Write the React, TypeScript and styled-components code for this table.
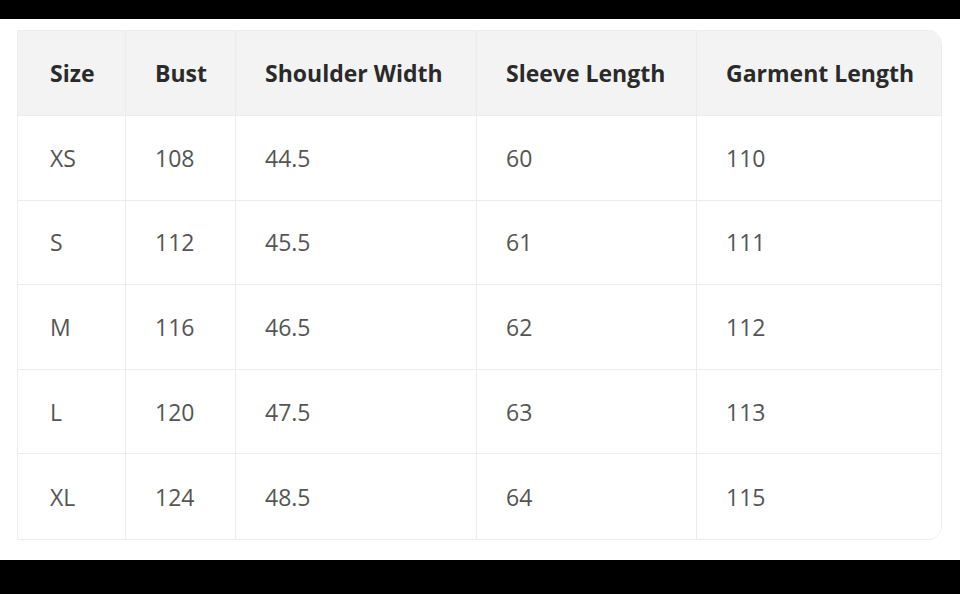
import React from "react";
import styled, { createGlobalStyle } from "styled-components";

const Global = createGlobalStyle`
  html, body { margin: 0; padding: 0; background: #000; }
  body { width: 960px; height: 594px; overflow: hidden; font-family: "Open Sans", "Noto Sans", sans-serif; }
`;

const Page = styled.div`
  width: 960px;
  height: 594px;
  display: flex;
  flex-direction: column;
  background: #000;
`;

const TopBar = styled.div`
  height: 19px;
  flex: none;
  background: #000;
`;

const BottomBar = styled.div`
  flex: 1;
  background: #000;
`;

const Sheet = styled.div`
  flex: none;
  background: #fff;
  padding: 11px 18px 20px 17px;
`;

const Table = styled.div`
  display: grid;
  grid-template-columns: 108px 110px 241px 220px 246px;
  grid-template-rows: 85px repeat(5, 84.6px);
  border: 1px solid #ececec;
  border-radius: 2px 14px 14px 2px;
  overflow: hidden;
  box-sizing: border-box;
`;

const Cell = styled.div<{ $head?: boolean; $first?: boolean; $last?: boolean; $bottom?: boolean }>`
  display: flex;
  align-items: center;
  padding-left: ${(p) => (p.$first ? 32 : 29)}px;
  background: ${(p) => (p.$head ? "#f3f3f3" : "#fff")};
  color: ${(p) => (p.$head ? "#2a2a2a" : "#555")};
  font-weight: ${(p) => (p.$head ? 700 : 400)};
  font-size: 23px;
  border-right: ${(p) => (p.$last ? "none" : "1px solid #ececec")};
  border-bottom: ${(p) => (p.$bottom ? "none" : "1px solid #ececec")};
  box-sizing: border-box;
  white-space: nowrap;
`;

const headers = ["Size", "Bust", "Shoulder Width", "Sleeve Length", "Garment Length"];
const rows = [
  ["XS", "108", "44.5", "60", "110"],
  ["S", "112", "45.5", "61", "111"],
  ["M", "116", "46.5", "62", "112"],
  ["L", "120", "47.5", "63", "113"],
  ["XL", "124", "48.5", "64", "115"],
];

export default function App() {
  return (
    <Page>
      <Global />
      <TopBar />
      <Sheet>
        <Table>
          {headers.map((h, i) => (
            <Cell key={h} $head $first={i === 0} $last={i === headers.length - 1}>
              {h}
            </Cell>
          ))}
          {rows.map((r, ri) =>
            r.map((v, ci) => (
              <Cell
                key={`${ri}-${ci}`}
                $first={ci === 0}
                $last={ci === r.length - 1}
                $bottom={ri === rows.length - 1}
              >
                {v}
              </Cell>
            ))
          )}
        </Table>
      </Sheet>
      <BottomBar />
    </Page>
  );
}
